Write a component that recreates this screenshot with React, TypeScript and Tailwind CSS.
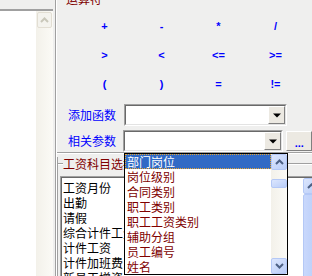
import React from "react";

const cjk = { fontFamily: '"Noto Sans CJK SC", "Noto Sans", sans-serif' };

const ops = ["+", "-", "*", "/", ">", "<", "<=", ">=", "(", ")", "=", "!="];

const popupItems = ["部门岗位", "岗位级别", "合同类别", "职工类别", "职工工资类别", "辅助分组", "员工编号", "姓名"];

const listItems = ["工资月份", "出勤", "请假", "综合计件工资", "计件工资", "计件加班费", "新员工增资"];

function Chevron({ up, color }: { up?: boolean; color: string }) {
  return (
    <svg width="9" height="6" viewBox="0 0 9 6">
      <path
        d={up ? "M1 5 L4.5 1.5 L8 5" : "M1 1 L4.5 4.5 L8 1"}
        fill="none"
        stroke={color}
        strokeWidth="2"
      />
    </svg>
  );
}

function XpButton({ up }: { up?: boolean }) {
  return (
    <div className="h-[16px] w-[16px] shrink-0 flex items-center justify-center rounded-[2px] border border-[#B4C8F6] bg-gradient-to-br from-[#DCE6FD] to-[#B9CDF8]">
      <Chevron up={up} color="#4D6185" />
    </div>
  );
}

function Combo({ width }: { width: string }) {
  return (
    <div className={`${width} h-[22px] flex border-t border-l border-[#A0A0A0] border-b-white border-r-white border-b border-r`}>
      <div className="flex-1 flex justify-end bg-white border-t border-l border-[#696969] border-b border-r border-b-[#E3E3E3] border-r-[#E3E3E3]">
        <div className="w-[17px] h-full flex items-center justify-center bg-[#ECE9E2] border-t border-l border-white border-b border-r border-b-[#808080] border-r-[#808080]">
          <svg width="8" height="6" viewBox="0 0 8 6">
            <path d="M0 1.5 H8 L4 5.5 Z" fill="#000" />
          </svg>
        </div>
      </div>
    </div>
  );
}

export default function App() {
  return (
    <div className="relative w-[312px] h-[276px] overflow-hidden flex bg-[#EFEFEE] text-[12px]" style={cjk}>
      {/* left list with disabled scrollbar */}
      <div className="w-[53px] shrink-0 flex flex-col">
        <div className="h-[9px]" />
        <div className="flex-1 flex border-t-2 border-[#A0A0A0]">
          <div className="w-[36px] bg-white" />
          <div className="w-[17px] flex flex-col items-center pt-[1px] bg-gradient-to-r from-[#F3F1EA] to-[#FBFAF6]">
            <div className="h-[16px] w-[15px] flex items-center justify-center rounded-[2px] border border-[#E2DED3] bg-[#F4F3EE]">
              <Chevron up color="#C9C7BA" />
            </div>
          </div>
        </div>
      </div>
      <div className="w-[2px] shrink-0 ml-[2px] border-l border-[#A0A0A0] border-r border-r-white" />

      {/* right panel */}
      <div className="flex-1 flex flex-col min-w-0">
        <div className="h-[155px] flex flex-col">
          <div className="ml-[9px] -mt-[8px] leading-[14px] text-[#800000]">运算符</div>
          <div className="ml-[19px] mt-[6px] grid grid-cols-[57px_57px_57px_57px] grid-rows-[29px_29px_29px]" style={{ fontFamily: '"Liberation Sans", sans-serif' }}>
            {ops.map((o) => (
              <div key={o} className="flex items-center justify-center text-[11px] font-bold text-[#0000FF]">
                {o}
              </div>
            ))}
          </div>
          <div className="mt-[5px] flex items-center">
            <div className="ml-[11px] w-[56px] text-[#0000FF] leading-[14px]">添加函数</div>
            <Combo width="w-[163px]" />
          </div>
          <div className="mt-[4px] flex items-center">
            <div className="ml-[11px] w-[56px] text-[#0000FF] leading-[14px]">相关参数</div>
            <Combo width="w-[163px]" />
            <div className="ml-[3px] w-[26px] h-[20px] flex items-end justify-center pb-[3px] bg-[#ECE9E2] border-t border-l border-white border-b border-r border-b-[#808080] border-r-[#808080] text-[11px] font-bold text-[#0000FF] leading-[8px]" style={{ fontFamily: '"Liberation Sans", sans-serif' }}>
              ...
            </div>
          </div>
        </div>
        <div className="h-[2px] border-t border-[#A0A0A0] border-b border-b-white" />

        {/* lower group */}
        <div className="flex-1 flex flex-col mt-[3px] border-l border-[#A0A0A0]">
          <div className="flex items-center h-[14px]">
            <div className="w-[5px] h-[2px] border-t border-[#A0A0A0] border-b border-b-white" />
            <div className="leading-[14px] text-[#800000] whitespace-nowrap">工资科目选择</div>
            <div className="flex-1 h-[2px] border-t border-[#A0A0A0] border-b border-b-white" />
          </div>
          <div className="ml-[2px] mt-[5px] w-[260px] flex-1 flex border-t border-l border-[#A0A0A0]">
            <div className="flex-1 flex border-t border-l border-[#696969] bg-white">
              <div className="flex-1 pt-[2px] pl-[1px]">
                {listItems.map((t) => (
                  <div key={t} className="h-[15px] leading-[15px] text-black whitespace-nowrap">
                    {t}
                  </div>
                ))}
              </div>
              <div className="w-[17px] flex flex-col">
                <XpButton up />
                <div className="flex-1 rounded-[2px] border border-[#B4C8F6] bg-gradient-to-r from-[#C9D8FC] to-[#B6CBF8]" />
              </div>
            </div>
          </div>
        </div>
      </div>

      {/* dropdown popup */}
      <div className="absolute left-[124px] top-[153px] w-[164px] h-[122px] border border-black bg-white flex">
        <div className="flex-1 min-w-0">
          {popupItems.map((t, i) => (
            <div
              key={t}
              className={
                i === 0
                  ? "h-[15px] leading-[13px] pl-[1px] bg-[#316AC5] text-white border border-dotted border-[#E8A530]"
                  : "h-[15px] leading-[15px] pl-[2px] text-[#800000] whitespace-nowrap"
              }
            >
              {t}
            </div>
          ))}
        </div>
        <div className="w-[16px] flex flex-col bg-gradient-to-r from-[#F3F1EA] to-[#FBFAF6]">
          <XpButton up />
          <div className="mt-[9px] h-[9px] rounded-[2px] border border-[#B4C8F6] bg-gradient-to-br from-[#DCE6FD] to-[#B9CDF8]" />
          <div className="flex-1" />
          <XpButton />
        </div>
      </div>
    </div>
  );
}
